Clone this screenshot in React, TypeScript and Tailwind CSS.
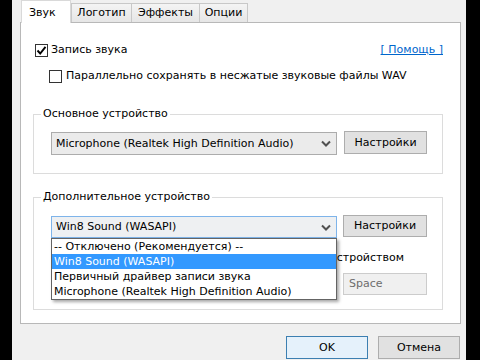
import React from "react";

function Chevron() {
  return (
    <svg width="10" height="7" viewBox="0 0 10 7" className="shrink-0">
      <polyline points="1,1.5 5,5.5 9,1.5" fill="none" stroke="#505050" strokeWidth="2" />
    </svg>
  );
}

function Check({ checked }: { checked?: boolean }) {
  return (
    <div className="w-[13px] h-[13px] border border-[#333] bg-white shrink-0 flex items-center justify-center">
      {checked && (
        <svg width="11" height="11" viewBox="0 0 11 11">
          <path d="M1.5 5.5 L4.2 8.5 L9.5 1.8" fill="none" stroke="#000" strokeWidth="1.9" />
        </svg>
      )}
    </div>
  );
}

export default function App() {
  return (
    <div className="w-[480px] h-[360px] bg-black flex overflow-hidden font-['DejaVu_Sans',sans-serif] text-[11px] leading-[14px] text-black">
      <div className="ml-[12px] w-[454px] h-full bg-[#f0f0f0] flex flex-col">
        {/* tabs */}
        <div className="flex items-end h-[22px] pl-[9px] relative z-10">
          <div className="h-[23px] -mb-px w-[50px] pl-[7px] pt-[5px] bg-white border border-[#d9d9d9] border-b-0">Звук</div>
          <div className="h-[19px] w-[61px] flex items-center justify-center bg-gradient-to-b from-[#f4f4f4] to-[#e6e6e6] border border-[#c8c8c8] border-b-0">Логотип</div>
          <div className="h-[19px] w-[68px] flex items-center justify-center bg-gradient-to-b from-[#f4f4f4] to-[#e6e6e6] border border-[#c8c8c8] border-b-0 border-l-0">Эффекты</div>
          <div className="h-[19px] w-[48px] flex items-center justify-center bg-gradient-to-b from-[#f4f4f4] to-[#e6e6e6] border border-[#c8c8c8] border-b-0 border-l-0">Опции</div>
        </div>

        {/* panel */}
        <div className="ml-[8px] w-[441px] h-[302px] bg-white border border-[#b8b8b8] pt-[19px] pl-[12px] pr-[17px]">
          <div className="flex h-[16px] items-center">
            <div className="ml-[2px]"><Check checked /></div>
            <span className="ml-[3px]">Запись звука</span>
            <span className="ml-auto text-[#0066cc] underline">[ Помощь ]</span>
          </div>
          <div className="flex h-[16px] items-center mt-[10px] pl-[16px]">
            <Check />
            <span className="ml-[4px]">Параллельно сохранять в несжатые звуковые файлы WAV</span>
          </div>

          {/* group 1 */}
          <div className="mt-[30px] h-[60px] border border-[#dcdcdc] relative pt-[17px] pl-[17px] flex items-start">
            <span className="absolute -top-[8px] left-[7px] px-[2px] bg-white">Основное устройство</span>
            <div className="w-[286px] h-[23px] bg-[#ebebeb] border border-[#acacac] flex items-center pl-[4px] pr-[5px]">
              <span className="flex-1">Microphone (Realtek High Definition Audio)</span>
              <Chevron />
            </div>
            <div className="ml-[7px] -mt-px w-[83px] h-[23px] bg-[#e1e1e1] border border-[#adadad] flex items-center justify-center">Настройки</div>
          </div>

          {/* group 2 */}
          <div className="mt-[23px] h-[113px] border border-[#dcdcdc] relative pt-[18px] pl-[17px]">
            <span className="absolute -top-[8px] left-[7px] px-[2px] bg-white">Дополнительное устройство</span>
            <div className="flex items-start">
              <div className="relative z-10">
                <div className="w-[286px] h-[22px] bg-[#eef0f2] border border-[#7eb4ea] flex items-center pl-[4px] pr-[5px]">
                  <span className="flex-1">Win8 Sound (WASAPI)</span>
                  <Chevron />
                </div>
                <div className="absolute top-full left-0 w-[286px] bg-white border border-[#646464] shadow-[2px_2px_3px_rgba(0,0,0,0.35)]">
                  <div className="h-[15px] pl-[2px] leading-[15px]">-- Отключено (Рекомендуется) --</div>
                  <div className="h-[15px] pl-[2px] leading-[15px] bg-[#3399ff] text-white">Win8 Sound (WASAPI)</div>
                  <div className="h-[15px] pl-[2px] leading-[15px]">Первичный драйвер записи звука</div>
                  <div className="h-[15px] pl-[2px] leading-[15px]">Microphone (Realtek High Definition Audio)</div>
                </div>
              </div>
              <div className="ml-[6px] -mt-px w-[84px] h-[22px] bg-[#e1e1e1] border border-[#adadad] flex items-center justify-center">Настройки</div>
            </div>
            <div className="w-[376px] h-[16px] mt-[12px] flex items-center justify-end pr-[23px]">
              <span>с основным устройством</span>
            </div>
            <div className="w-[376px] mt-[7px] flex items-center justify-end">
              <div className="w-[84px] h-[22px] bg-[#f0f0f0] border border-[#cccccc] flex items-center pl-[5px] text-[#6d6d6d]">Space</div>
            </div>
          </div>
        </div>

        {/* buttons */}
        <div className="mt-[12px] flex justify-end pr-[6px] gap-[10px]">
          <div className="w-[82px] h-[23px] bg-[#e5f1fb] border border-[#3c7fb1] flex items-center justify-center">OK</div>
          <div className="w-[82px] h-[23px] bg-[#e1e1e1] border border-[#adadad] flex items-center justify-center">Отмена</div>
        </div>
      </div>
    </div>
  );
}
